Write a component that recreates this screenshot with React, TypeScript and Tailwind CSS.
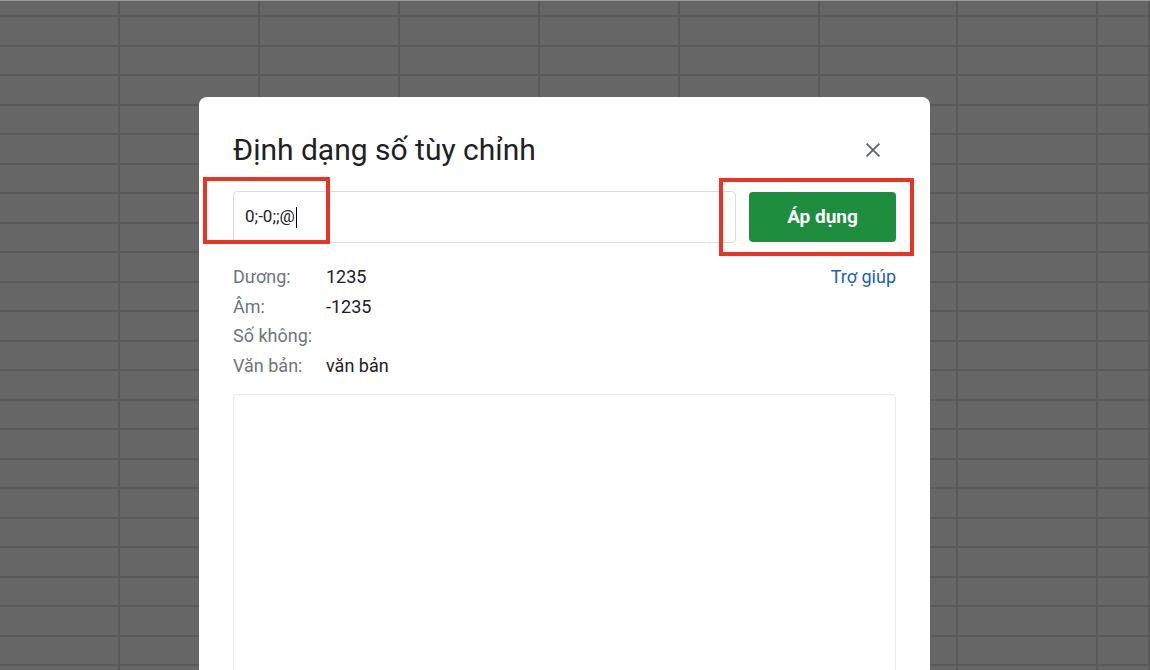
import React from 'react'

const colWidths = [120, 140, 140, 140, 140, 140, 138, 140, 52]

function SheetBackdrop() {
  const rows = Array.from({ length: 24 }, (_, i) => i)
  return (
    <div className="absolute inset-0 overflow-hidden bg-[#666666] border-t border-[#9a9a9a]">
      {rows.map((r) => (
        <div key={r} className={`flex border-b-2 border-[#595959] ${r === 0 ? 'h-[16px]' : 'h-[29.5px]'}`}>
          {colWidths.map((w, c) => (
            <div key={c} className="shrink-0 border-r-2 border-[#595959]" style={{ width: w }} />
          ))}
        </div>
      ))}
    </div>
  )
}

const rows: [string, string][] = [
  ['Dương:', '1235'],
  ['Âm:', '-1235'],
  ['Số không:', ''],
  ['Văn bản:', 'văn bản'],
]

export default function App() {
  return (
    <div
      className="relative w-[1150px] h-[670px] overflow-hidden"
      style={{ fontFamily: 'Roboto, "Noto Sans", sans-serif' }}
    >
      <SheetBackdrop />

      <div className="absolute left-[199px] top-[97px] w-[731px] h-[620px] rounded-lg bg-white px-[34px] pt-[34px]">
        <div className="flex items-center justify-between">
          <h1 className="text-[30px] leading-[38px] text-[#202124]">Định dạng số tùy chỉnh</h1>
          <svg width="22" height="22" viewBox="0 0 24 24" className="mr-[12px] text-[#5f6368]">
            <path d="M5 5l14 14M19 5L5 19" stroke="currentColor" strokeWidth="2" />
          </svg>
        </div>

        <div className="mt-[22px] flex gap-[13px]">
          <div className="flex h-[52px] flex-1 items-center rounded border border-[#dadce0] px-[11px] text-[17px] text-[#202124]">
            0;-0;;@<span className="ml-px inline-block h-[21px] w-px bg-black" />
          </div>
          <button className="mt-px h-[50px] w-[147px] rounded bg-[#1e8e3e] text-[19px] font-bold text-white">
            Áp dụng
          </button>
        </div>

        <div className="mt-[19px] flex justify-between text-[18px]">
          <div className="flex flex-col">
            {rows.map(([k, v]) => (
              <div key={k} className="flex h-[29.5px] items-center">
                <span className="w-[93px] text-[#70757a]">{k}</span>
                <span className="text-[#202124]">{v}</span>
              </div>
            ))}
          </div>
          <a className="h-[29.5px] leading-[29.5px] text-[#1a5fc1]">Trợ giúp</a>
        </div>

        <div className="mt-[14px] h-[300px] rounded border border-[#e8eaed]" />
      </div>

      <div className="absolute left-[203px] top-[177px] h-[67px] w-[127px] border-4 border-[#ea3323]" />
      <div className="absolute left-[719px] top-[178px] h-[78px] w-[195px] border-4 border-[#ea3323]" />
    </div>
  )
}
